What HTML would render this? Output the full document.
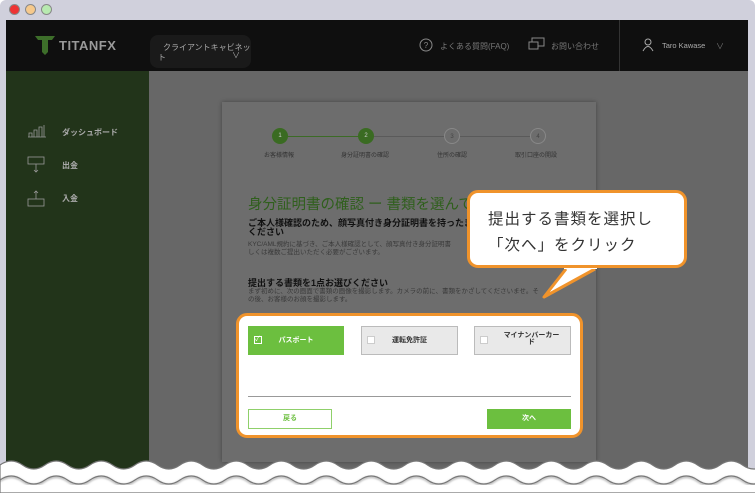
<!DOCTYPE html>
<html><head><meta charset="utf-8"><style>
*{margin:0;padding:0;box-sizing:border-box}
body{width:755px;height:493px;overflow:hidden;background:#fff;font-family:"Liberation Sans","Noto Sans CJK JP",sans-serif;position:relative}
.abs{position:absolute}
.frame{left:0;top:0;width:755px;height:470px;background:#d0d0dc;border-radius:6px 6px 0 0}
.dot{width:11px;height:11px;border-radius:50%;top:4px;border:1px solid #888}
.hdr{left:6px;top:20px;width:742px;height:51px;background:#0f0f0f}
.side{left:6px;top:71px;width:143px;height:400px;background:#22341a}
.main{left:149px;top:71px;width:599px;height:400px;background:#676767}
.card{left:222px;top:102px;width:374px;height:360px;background:#6d6d6d;box-shadow:0 0 4px rgba(0,0,0,.35)}
.t{color:#aaa;font-size:8px;white-space:nowrap}
.sc{width:16px;height:16px;border-radius:50%;font-size:6px;color:#ccc;text-align:center;line-height:16px}
.lab{font-size:6px;color:#333;white-space:nowrap}
.box{left:236px;top:313px;width:347px;height:125px;background:#fff;border:3px solid #f0932b;border-radius:11px}
.btn{font-size:7px;font-weight:bold;text-align:center;white-space:nowrap}
.call{left:467px;top:190px;width:220px;height:78px;background:#fff;border:3px solid #f0932b;border-radius:11px;font-size:15.5px;color:#333;padding:14px 0 0 18px;line-height:26px;letter-spacing:1px}
</style></head><body>
<div class="abs frame"></div>
<div class="abs dot" style="left:9px;background:#e33"></div>
<div class="abs dot" style="left:25px;background:#f6c98c"></div>
<div class="abs dot" style="left:41px;background:#b8eab0"></div>
<div class="abs hdr"></div>
<svg class="abs" style="left:35px;top:35px" width="20" height="20" viewBox="0 0 20 20"><path d="M0 1h20l-3 4h-4v12l-3 3-3-3V5H3z" fill="#3d6e2a"/></svg>
<div class="abs" style="left:59px;top:38px;color:#999;font-weight:bold;font-size:13px;letter-spacing:0.5px">TITANFX</div>
<div class="abs" style="left:150px;top:35px;width:101px;height:33px;background:#1a1a1a;border-radius:8px"></div>
<div class="abs t" style="left:163px;top:42px">クライアントキャビネッ</div>
<div class="abs t" style="left:158px;top:52px">ト</div>
<div class="abs t" style="left:232px;top:50px">∨</div>
<svg class="abs" style="left:419px;top:38px" width="14" height="14"><circle cx="7" cy="7" r="6" fill="none" stroke="#888" stroke-width="1"/><text x="7" y="10" font-size="8" fill="#888" text-anchor="middle">?</text></svg>
<div class="abs t" style="left:440px;top:41px;color:#777">よくある質問(FAQ)</div>
<svg class="abs" style="left:528px;top:37px" width="18" height="15"><rect x="4" y="1" width="12" height="8" fill="none" stroke="#888"/><rect x="1" y="5" width="9" height="7" fill="#0f0f0f" stroke="#888"/></svg>
<div class="abs t" style="left:551px;top:41px;color:#777">お問い合わせ</div>
<div class="abs" style="left:619px;top:20px;width:1px;height:51px;background:#333"></div>
<svg class="abs" style="left:642px;top:38px" width="12" height="14"><circle cx="6" cy="4" r="3" fill="none" stroke="#aaa"/><path d="M1 13q5-9 10 0" fill="none" stroke="#aaa"/></svg>
<div class="abs t" style="left:662px;top:41px;font-size:7.5px">Taro Kawase</div>
<div class="abs t" style="left:716px;top:41px;color:#777">∨</div>
<div class="abs side"></div>
<svg class="abs" style="left:27px;top:124px" width="20" height="14" fill="none" stroke="#999" stroke-width=".8"><path d="M1 13h18M2 13V9h3v4M7 13V6h3v7M12 13V3h3v10M17 13V1"/></svg>
<div class="abs t" style="left:62px;top:127px;font-weight:bold;color:#aaa">ダッシュボード</div>
<svg class="abs" style="left:27px;top:156px" width="18" height="18" fill="none" stroke="#999" stroke-width=".8"><rect x="1" y="1" width="16" height="7"/><path d="M9 8v8M7 14l2 2 2-2"/></svg>
<div class="abs t" style="left:62px;top:160px;font-weight:bold;color:#aaa">出金</div>
<svg class="abs" style="left:27px;top:190px" width="18" height="18" fill="none" stroke="#999" stroke-width=".8"><rect x="1" y="9" width="16" height="7"/><path d="M9 9V1M7 3l2-2 2 2"/></svg>
<div class="abs t" style="left:62px;top:193px;font-weight:bold;color:#aaa">入金</div>
<div class="abs main"></div>
<div class="abs card"></div>
<div class="abs" style="left:280px;top:136px;width:86px;height:1px;background:#3c6b26"></div>
<div class="abs" style="left:366px;top:136px;width:172px;height:1px;background:#5a5a5a"></div>
<div class="abs sc" style="left:272px;top:128px;background:#3a6b22">1</div>
<div class="abs sc" style="left:358px;top:128px;background:#3a6b22">2</div>
<div class="abs sc" style="left:444px;top:128px;border:1px solid #888;background:#6d6d6d;color:#444">3</div>
<div class="abs sc" style="left:530px;top:128px;border:1px solid #888;background:#6d6d6d;color:#444">4</div>
<div class="abs lab" style="left:264px;top:150px">お客様情報</div>
<div class="abs lab" style="left:341px;top:150px">身分証明書の確認</div>
<div class="abs lab" style="left:437px;top:150px">住所の確認</div>
<div class="abs lab" style="left:515px;top:150px">取引口座の開設</div>
<div class="abs" style="left:248px;top:193px;font-size:14.5px;color:#2f5f1c;white-space:nowrap">身分証明書の確認 ー 書類を選んでください</div>
<div class="abs" style="left:248px;top:219px;font-size:9px;font-weight:bold;color:#111;line-height:9px;white-space:nowrap">ご本人様確認のため、顔写真付き身分証明書を持ったまま<br>ください</div>
<div class="abs lab" style="left:248px;top:241px;line-height:8px;font-size:6.5px;color:#3a3a3a">KYC/AML規約に基づき、ご本人様確認として、顔写真付き身分証明書<br>しくは複数ご提出いただく必要がございます。</div>
<div class="abs" style="left:248px;top:276px;font-size:9px;font-weight:bold;color:#111;white-space:nowrap">提出する書類を1点お選びください</div>
<div class="abs lab" style="left:248px;top:288px;line-height:8px;font-size:6.5px;color:#3a3a3a">まず初めに、次の画面で書類の画像を撮影します。カメラの前に、書類をかざしてくださいませ。そ<br>の後、お客様のお顔を撮影します。</div>
<div class="abs box"></div>
<div class="abs btn" style="left:248px;top:326px;width:96px;height:29px;background:#6cbf3f;color:#fff;line-height:29px">パスポート</div>
<div class="abs" style="left:254px;top:336px;width:8px;height:8px;border:1px solid #fff;font-size:7px;color:#fff;line-height:6px">✓</div>
<div class="abs btn" style="left:361px;top:326px;width:97px;height:29px;background:#e9e9e9;border:1px solid #bbb;color:#333;line-height:27px">運転免許証</div>
<div class="abs" style="left:367px;top:336px;width:8px;height:8px;border:1px solid #ccc;background:#fff"></div>
<div class="abs btn" style="left:474px;top:326px;width:97px;height:29px;background:#e9e9e9;border:1px solid #bbb;color:#333;line-height:7px;padding:5px 0 0 18px">マイナンバーカー<br>ド</div>
<div class="abs" style="left:480px;top:336px;width:8px;height:8px;border:1px solid #ccc;background:#fff"></div>
<div class="abs" style="left:248px;top:396px;width:323px;height:1px;background:#999"></div>
<div class="abs btn" style="left:248px;top:409px;width:84px;height:20px;border:1px solid #8fd06a;color:#6cbf3f;line-height:18px">戻る</div>
<div class="abs btn" style="left:487px;top:409px;width:84px;height:20px;background:#6cbf3f;color:#fff;line-height:20px">次へ</div>
<svg class="abs" style="left:540px;top:262px" width="60" height="40"><path d="M26 7 L4 35 L55 7" fill="#fff" stroke="#f0932b" stroke-width="3" stroke-linejoin="round"/><rect x="24" y="0" width="33" height="7" fill="#fff"/></svg>
<div class="abs call">提出する書類を選択し<br>「次へ」をクリック</div>
<svg class="abs" style="left:0;top:455px" width="755" height="38" viewBox="0 0 755 38">
<defs><filter id="s"><feDropShadow dx="0" dy="1" stdDeviation="1" flood-color="#000" flood-opacity=".5"/></filter></defs>
<path d="M0 10 q11.25 -8 22.5 0 t22.5 0 t22.5 0 t22.5 0 t22.5 0 t22.5 0 t22.5 0 t22.5 0 t22.5 0 t22.5 0 t22.5 0 t22.5 0 t22.5 0 t22.5 0 t22.5 0 t22.5 0 t22.5 0 t22.5 0 t22.5 0 t22.5 0 t22.5 0 t22.5 0 t22.5 0 t22.5 0 t22.5 0 t22.5 0 t22.5 0 t22.5 0 t22.5 0 t22.5 0 t22.5 0 t22.5 0 t22.5 0 t22.5 0 V38 H0Z" fill="#fff" stroke="#777" stroke-width="1.2"/>
<path d="M0 25 q11.25 -8 22.5 0 t22.5 0 t22.5 0 t22.5 0 t22.5 0 t22.5 0 t22.5 0 t22.5 0 t22.5 0 t22.5 0 t22.5 0 t22.5 0 t22.5 0 t22.5 0 t22.5 0 t22.5 0 t22.5 0 t22.5 0 t22.5 0 t22.5 0 t22.5 0 t22.5 0 t22.5 0 t22.5 0 t22.5 0 t22.5 0 t22.5 0 t22.5 0 t22.5 0 t22.5 0 t22.5 0 t22.5 0 t22.5 0 t22.5 0" fill="none" stroke="#777" stroke-width="1.2" filter="url(#s)"/>
</svg>
</body></html>
